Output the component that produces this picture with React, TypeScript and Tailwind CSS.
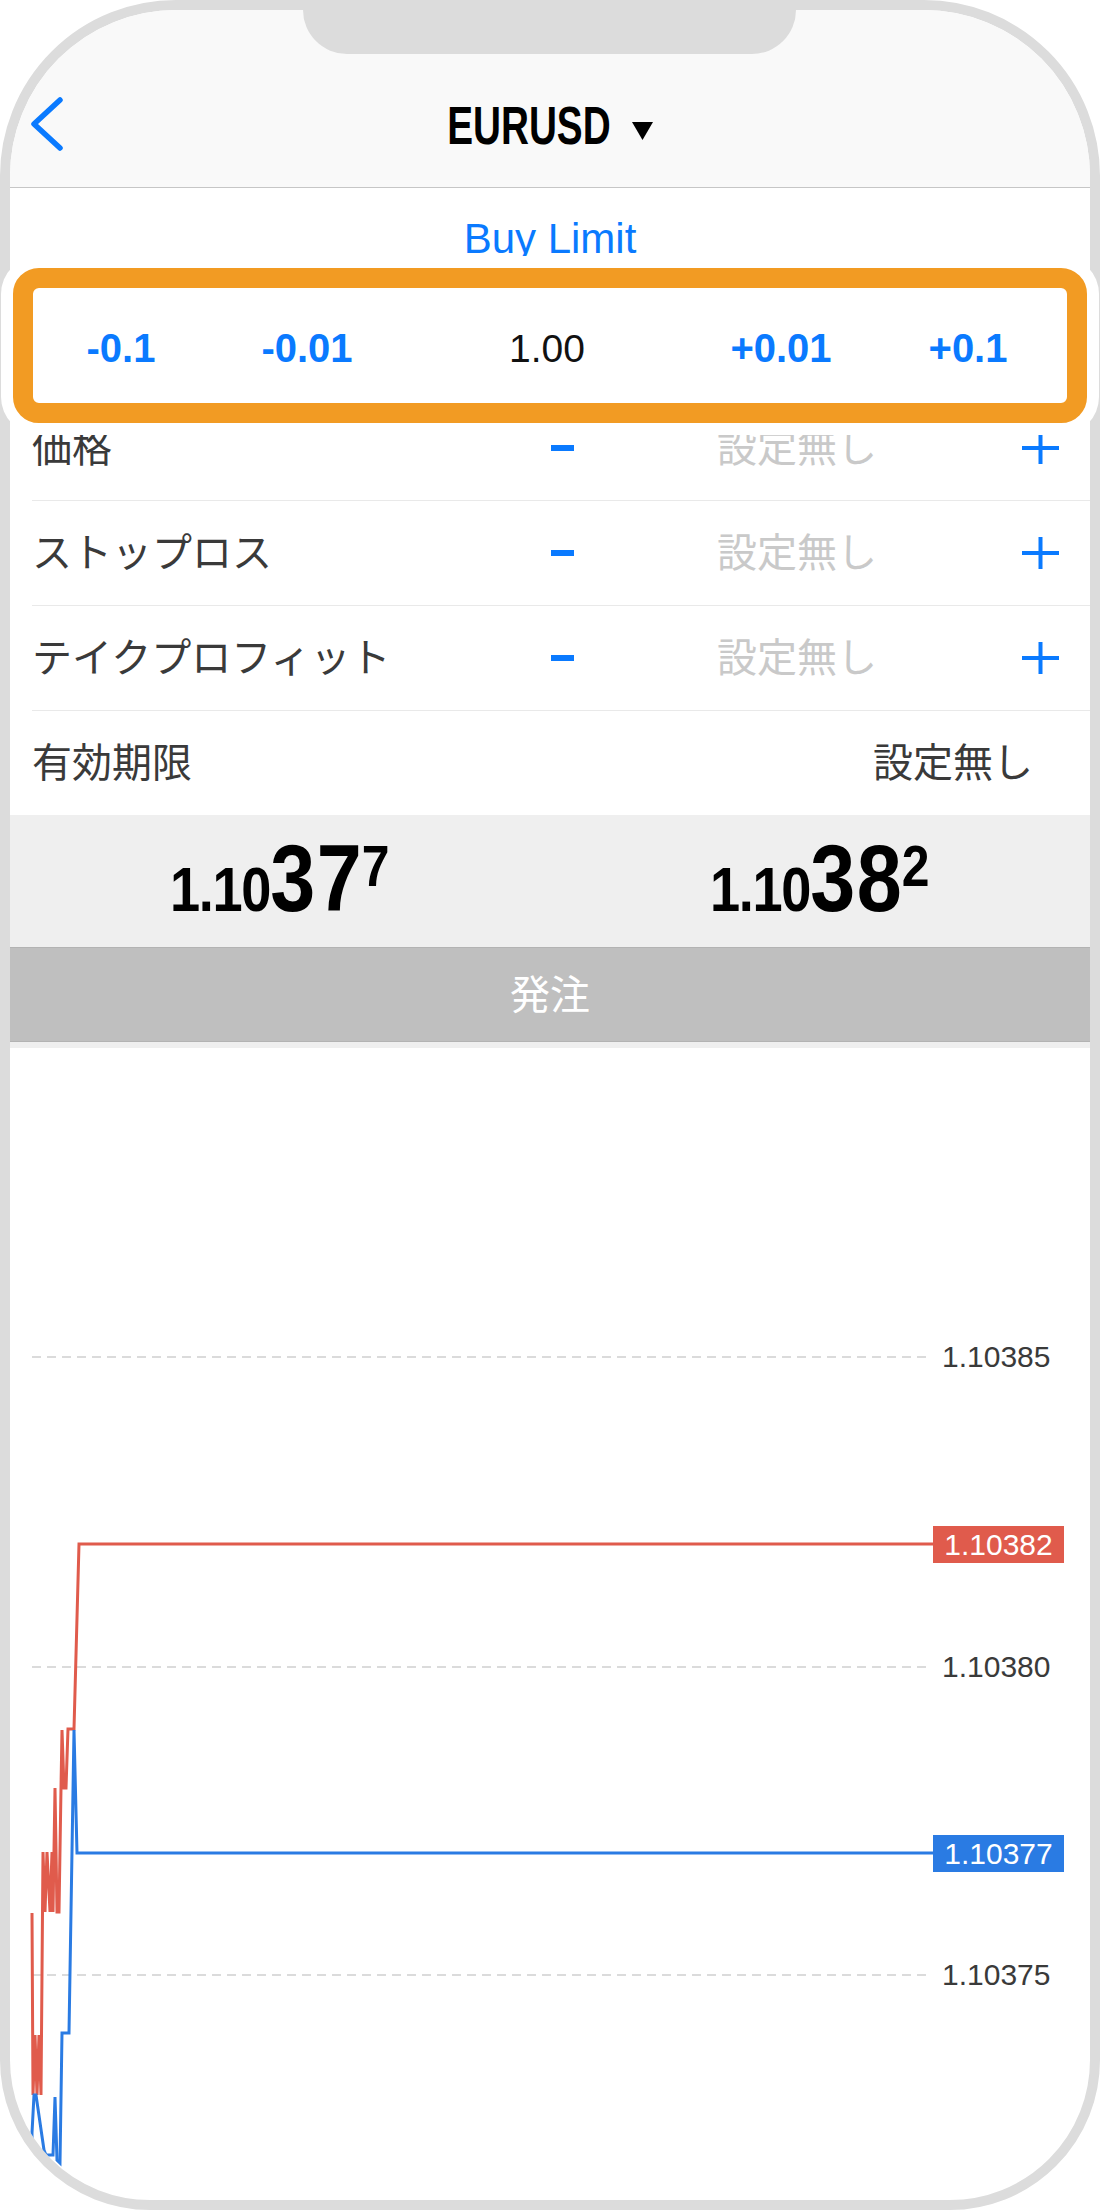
import React from 'react';

const FONT = "font-['Liberation_Sans','Noto_Sans_CJK_JP',sans-serif]";

// chart is drawn in its own box: x from content left (10px), y from chart top (1048px)
const RED_PTS = [
  [32, 1913], [33, 2095], [35, 2035], [37, 2095], [39, 2035], [41, 2095], [43, 1852],
  [45, 1912], [47, 1852], [50, 1912], [52, 1852], [53, 1912], [55, 1788], [57, 1912],
  [59, 1912], [61, 1788], [62, 1730], [64, 1788], [66, 1788], [68, 1729], [74, 1729],
  [79, 1544], [933, 1544],
];
const BLUE_PTS = [
  [32, 2200], [32, 2133], [34, 2095], [36, 2095], [44, 2150], [46, 2155], [53, 2155],
  [55, 2097], [57, 2160], [60, 2163], [62, 2033], [69, 2033], [74, 1730], [77, 1853],
  [933, 1853],
];
const toPath = (pts: number[][]) => pts.map(([x, y]) => `${x - 10},${y - 1048}`).join(' ');

const GRID = [
  { y: 309, label: '1.10385' },
  { y: 619, label: '1.10380' },
  { y: 927, label: '1.10375' },
];

function Plus() {
  return (
    <svg width="37" height="32" viewBox="0 0 37 32">
      <path d="M0 16H37M18.5 0V32" stroke="#0a7aff" strokeWidth="4" />
    </svg>
  );
}

function StepRow({ label }: { label: string }) {
  return (
    <div className="ml-[22px] grid h-[105px] shrink-0 grid-cols-[498px_64px_406px_80px] items-center border-b border-[#e9e9e9] leading-none">
      <span className="text-[40px] text-[#3a3a3a]">{label}</span>
      <span className="flex justify-center">
        <span className="h-[6px] w-[23px] bg-[#0a7aff]" />
      </span>
      <span className="text-center text-[40px] text-[#c9c9c9]">設定無し</span>
      <span className="flex justify-center">
        <Plus />
      </span>
    </div>
  );
}

function Price({ head, big, tail }: { head: string; big: string; tail: string }) {
  return (
    <div className="flex justify-center pt-[17px]">
      <span className="inline-block whitespace-nowrap font-bold leading-none text-black scale-x-[0.86]">
        <span className="text-[63px] tracking-[-1.5px]">{head}</span>
        <span className="text-[94px] tracking-[2px]">{big}</span>
        <span className="-ml-[2px] align-[25px] text-[58px]">{tail}</span>
      </span>
    </div>
  );
}

export default function App() {
  return (
    <div className={`relative h-[2210px] w-[1100px] bg-white ${FONT}`}>
      <div className="flex h-full w-full flex-col overflow-hidden rounded-t-[176px] rounded-b-[150px] border-[10px] border-[#dcdcdc] bg-white">
        {/* header */}
        <div className="grid h-[178px] shrink-0 grid-cols-[1fr_auto_1fr] items-start border-b border-[#c6c6c6] bg-[#f9f9f9] pt-[87px]">
          <svg className="ml-[20px]" width="36" height="54" viewBox="0 0 36 54">
            <path d="M30 3L4 27L30 51" fill="none" stroke="#0a7aff" strokeWidth="5.5" strokeLinecap="round" strokeLinejoin="round" />
          </svg>
          <div className="mt-[2px] flex items-center">
            <span className="-mx-[30px] inline-block text-[53px] font-bold leading-none text-black scale-x-[0.73]">EURUSD</span>
            <svg className="ml-[21px] mt-[10px]" width="21" height="18" viewBox="0 0 21 18">
              <polygon points="0,0 21,0 10.5,18" fill="#000" />
            </svg>
          </div>
          <div />
        </div>

        <div className="flex h-[102px] shrink-0 items-center justify-center text-[42px] leading-none text-[#0a7aff]">
          Buy Limit
        </div>

        {/* volume */}
        <div className="grid h-[106px] shrink-0 grid-cols-[222px_150px_330px_138px_236px] items-center pt-[10px] text-center leading-none">
          <span className="text-[40px] font-bold text-[#0a7aff]">-0.1</span>
          <span className="text-[40px] font-bold text-[#0a7aff]">-0.01</span>
          <span className="text-[39px] text-[#111]">1.00</span>
          <span className="text-[40px] font-bold text-[#0a7aff]">+0.01</span>
          <span className="text-[40px] font-bold text-[#0a7aff]">+0.1</span>
        </div>

        <StepRow label="価格" />
        <StepRow label="ストップロス" />
        <StepRow label="テイクプロフィット" />

        <div className="ml-[22px] flex h-[104px] shrink-0 items-center justify-between pr-[57px] text-[40px] leading-none text-[#3a3a3a]">
          <span>有効期限</span>
          <span>設定無し</span>
        </div>

        {/* bid / ask */}
        <div className="grid h-[132px] shrink-0 grid-cols-2 bg-[#efefef]">
          <Price head="1.10" big="37" tail="7" />
          <Price head="1.10" big="38" tail="2" />
        </div>

        <div className="flex h-[95px] shrink-0 items-center justify-center border-y border-[#b3b3b3] bg-[#bfbfbf] text-[40px] leading-none text-white">
          発注
        </div>
        <div className="h-[6px] shrink-0 bg-[#efefef]" />

        {/* chart */}
        <div className="relative flex-1">
          <svg className="absolute inset-0 h-full w-full" viewBox="0 0 1080 1152" preserveAspectRatio="none">
            {GRID.map((g) => (
              <line key={g.y} x1="22" y1={g.y} x2="920" y2={g.y} stroke="#cfcfcf" strokeWidth="1.5" strokeDasharray="9 6" />
            ))}
            <polyline points={toPath(RED_PTS)} fill="none" stroke="#e05b4c" strokeWidth="3" />
            <polyline points={toPath(BLUE_PTS)} fill="none" stroke="#2a7be3" strokeWidth="3" />
          </svg>
          {GRID.map((g) => (
            <div
              key={g.label}
              className="absolute left-[932px] flex h-[36px] items-center text-[30px] leading-none text-[#3a3a3a]"
              style={{ top: g.y - 18 }}
            >
              {g.label}
            </div>
          ))}
          <div className="absolute left-[923px] top-[478px] flex h-[37px] w-[131px] items-center justify-center bg-[#e05b4c] text-[30px] leading-none text-white">
            1.10382
          </div>
          <div className="absolute left-[923px] top-[787px] flex h-[37px] w-[131px] items-center justify-center bg-[#2a7be3] text-[30px] leading-none text-white">
            1.10377
          </div>
        </div>
      </div>

      {/* notch */}
      <div className="absolute left-[303px] top-0 h-[54px] w-[493px] rounded-b-[44px] bg-[#dcdcdc]" />

      {/* highlight */}
      <div className="absolute left-[13px] top-[268px] h-[155px] w-[1074px] rounded-[26px] border-[20px] border-[#f29b23] shadow-[0_0_0_12px_white]" />
    </div>
  );
}
